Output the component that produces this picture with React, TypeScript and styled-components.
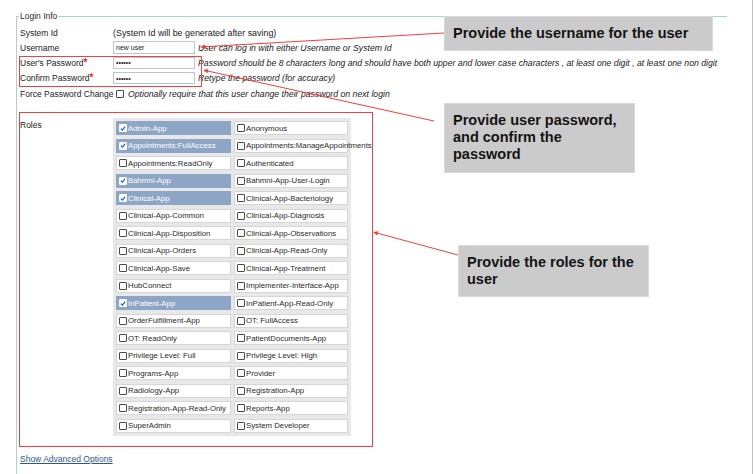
import React from "react";
import styled, { createGlobalStyle } from "styled-components";

const GlobalStyle = createGlobalStyle`
  html, body { margin: 0; padding: 0; background: #fff; }
  body { font-family: "Liberation Sans", Arial, sans-serif; color: #1e1e1e; }
  * { box-sizing: border-box; }
`;

const Page = styled.div`
  position: relative;
  width: 753px;
  height: 474px;
  border-right: 1px solid #c4c4c4;
  padding: 11px 0 0 16px;
  overflow: hidden;
`;

const Fieldset = styled.fieldset`
  margin: 0;
  width: 711px;
  min-height: 470px;
  border: none;
  border-top: 1px solid #a9d2d3;
  border-left: 1px solid #a9d2d3;
  padding: 0 0 0 2px;
`;

const Legend = styled.legend`
  font-size: 8.5px;
  line-height: 10px;
  padding: 0 1px;
  margin: 0;
  color: #2a2a2a;
`;

const Form = styled.div`
  display: flex;
  flex-direction: column;
  padding-top: 5px;
`;

const Row = styled.div<{ $h: number }>`
  display: flex;
  align-items: center;
  height: ${(p) => p.$h}px;
  font-size: 8.5px;
  white-space: nowrap;
`;

const Label = styled.div`
  width: 94px;
  flex: none;
  padding-left: 1px;
  color: #222;
`;

const Req = styled.span`
  color: #e41e1e;
  font-size: 10px;
  font-weight: bold;
  line-height: 8px;
`;

const Value = styled.span`
  color: #222;
  font-size: 8.9px;
`;

const TextInput = styled.input<{ $h: number }>`
  width: 82px;
  height: ${(p) => p.$h}px;
  flex: none;
  margin: 0;
  padding: 0 2px;
  border: 1px solid #b9c8c8;
  background: #fff;
  font-family: "Liberation Sans", Arial, sans-serif;
  font-size: 7px;
  color: #222;
  outline: none;
`;

const Hint = styled.span<{ $ml?: number }>`
  font-style: italic;
  font-size: 8.7px;
  margin-left: ${(p) => (p.$ml ?? 3)}px;
  color: #222;
`;

const Box = styled.span<{ $checked?: boolean }>`
  display: inline-flex;
  align-items: center;
  justify-content: center;
  flex: none;
  width: 8px;
  height: 8px;
  border: 1px solid ${(p) => (p.$checked ? "#ffffff" : "#4a4a4a")};
  border-radius: 1px;
  background: #fff;
`;

const FpcBox = styled(Box)`
  margin: 0 4px 0 3px;
`;

const RolesSection = styled.div`
  display: flex;
  align-items: flex-start;
  margin-top: 17px;
  font-size: 8.5px;
`;

const RolesLabel = styled.div`
  width: 94px;
  flex: none;
  padding: 2px 0 0 1px;
  line-height: 10px;
  color: #222;
`;

const RolesGrid = styled.div`
  display: grid;
  grid-template-columns: 115px 114px;
  grid-auto-rows: 14px;
  column-gap: 3px;
  row-gap: 3.5px;
  padding: 3px;
  background: #e8e8e8;
`;

const Cell = styled.div<{ $checked?: boolean }>`
  display: flex;
  align-items: center;
  gap: 1px;
  padding-left: 2px;
  border: 1px solid ${(p) => (p.$checked ? "#8ea6c5" : "#d6d6d6")};
  background: ${(p) => (p.$checked ? "#8ea6c5" : "#fff")};
  color: ${(p) => (p.$checked ? "#fff" : "#2a2a2a")};
  font-size: 7.8px;
  white-space: nowrap;
  overflow: visible;
`;

const AdvLink = styled.a`
  display: inline-block;
  margin-top: 18px;
  margin-left: 1px;
  font-size: 8.5px;
  color: #2b5a8a;
  text-decoration: underline;
  cursor: pointer;
`;

const Note = styled.div<{ $x: number; $y: number; $w: number; $h: number; $pt: number }>`
  position: absolute;
  left: ${(p) => p.$x}px;
  top: ${(p) => p.$y}px;
  width: ${(p) => p.$w}px;
  height: ${(p) => p.$h}px;
  padding: ${(p) => p.$pt}px 8px 0 8px;
  background: #cbcbcb;
  border: 1px solid #dadada;
  font-family: "Liberation Sans", Arial, sans-serif;
  font-weight: bold;
  font-size: 14.5px;
  line-height: 17px;
  color: #141414;
`;

const Highlight = styled.div<{ $x: number; $y: number; $w: number; $h: number }>`
  position: absolute;
  left: ${(p) => p.$x}px;
  top: ${(p) => p.$y}px;
  width: ${(p) => p.$w}px;
  height: ${(p) => p.$h}px;
  border: 1px solid #f04040;
  pointer-events: none;
`;

const Arrows = styled.svg`
  position: absolute;
  left: 0;
  top: 0;
  pointer-events: none;
`;

const Check = () => (
  <svg width="7" height="7" viewBox="0 0 7 7">
    <path d="M1 3.6 L2.8 5.4 L6 1.2" fill="none" stroke="#1f5fbf" strokeWidth="1.4" />
  </svg>
);

const roles: [string, boolean][] = [
  ["Admin-App", true], ["Anonymous", false],
  ["Appointments:FullAccess", true], ["Appointments:ManageAppointments", false],
  ["Appointments:ReadOnly", false], ["Authenticated", false],
  ["Bahmni-App", true], ["Bahmni-App-User-Login", false],
  ["Clinical-App", true], ["Clinical-App-Bacteriology", false],
  ["Clinical-App-Common", false], ["Clinical-App-Diagnosis", false],
  ["Clinical-App-Disposition", false], ["Clinical-App-Observations", false],
  ["Clinical-App-Orders", false], ["Clinical-App-Read-Only", false],
  ["Clinical-App-Save", false], ["Clinical-App-Treatment", false],
  ["HubConnect", false], ["Implementer-Interface-App", false],
  ["InPatient-App", true], ["InPatient-App-Read-Only", false],
  ["OrderFulfillment-App", false], ["OT: FullAccess", false],
  ["OT: ReadOnly", false], ["PatientDocuments-App", false],
  ["Privilege Level: Full", false], ["Privilege Level: High", false],
  ["Programs-App", false], ["Provider", false],
  ["Radiology-App", false], ["Registration-App", false],
  ["Registration-App-Read-Only", false], ["Reports-App", false],
  ["SuperAdmin", false], ["System Developer", false],
];

const Arrow = ({ x1, y1, x2, y2 }: { x1: number; y1: number; x2: number; y2: number }) => {
  const a = Math.atan2(y2 - y1, x2 - x1);
  const L = 5;
  const w = 2.2;
  const bx = x2 - L * Math.cos(a);
  const by = y2 - L * Math.sin(a);
  const p1 = `${bx + w * Math.sin(a)},${by - w * Math.cos(a)}`;
  const p2 = `${bx - w * Math.sin(a)},${by + w * Math.cos(a)}`;
  return (
    <g>
      <line x1={x1} y1={y1} x2={bx} y2={by} stroke="#f23c3c" strokeWidth="1" />
      <polygon points={`${x2},${y2} ${p1} ${p2}`} fill="#f23c3c" />
    </g>
  );
};

export default function App() {
  return (
    <>
      <GlobalStyle />
      <Page>
        <Fieldset>
          <Legend>Login Info</Legend>
          <Form>
            <Row $h={14}>
              <Label>System Id</Label>
              <Value>(System Id will be generated after saving)</Value>
            </Row>
            <Row $h={15}>
              <Label>Username</Label>
              <TextInput $h={13} readOnly value="new user" />
              <Hint>User can log in with either Username or System Id</Hint>
            </Row>
            <Row $h={15}>
              <Label>
                User's Password<Req>*</Req>
              </Label>
              <TextInput $h={12} type="password" readOnly value="abcdef" />
              <Hint>
                Password should be 8 characters long and should have both upper and lower case characters , at least one digit , at least one non digit
              </Hint>
            </Row>
            <Row $h={16}>
              <Label>
                Confirm Password<Req>*</Req>
              </Label>
              <TextInput $h={12} type="password" readOnly value="abcdef" />
              <Hint>Retype the password (for accuracy)</Hint>
            </Row>
            <Row $h={15}>
              <Label>Force Password Change</Label>
              <FpcBox />
              <Hint $ml={0}>Optionally require that this user change their password on next login</Hint>
            </Row>
          </Form>
          <RolesSection>
            <RolesLabel>Roles</RolesLabel>
            <RolesGrid>
              {roles.map(([name, checked]) => (
                <Cell key={name} $checked={checked}>
                  <Box $checked={checked}>{checked && <Check />}</Box>
                  {name}
                </Cell>
              ))}
            </RolesGrid>
          </RolesSection>
          <AdvLink>Show Advanced Options</AdvLink>
        </Fieldset>

        <Highlight $x={19} $y={56} $w={183} $h={31} />
        <Highlight $x={19} $y={112} $w={354} $h={335} />

        <Arrows width="755" height="474" viewBox="0 0 755 474">
          <Arrow x1={444} y1={33} x2={200} y2={47} />
          <Arrow x1={434} y1={121} x2={203} y2={70} />
          <Arrow x1={458} y1={255} x2={373} y2={232} />
        </Arrows>

        <Note $x={444} $y={16} $w={269} $h={35} $pt={8}>
          Provide the username for the user
        </Note>
        <Note $x={444} $y={103} $w={191} $h={70} $pt={8}>
          Provide user password, and confirm the password
        </Note>
        <Note $x={458} $y={245} $w={191} $h={52} $pt={8}>
          Provide the roles for the user
        </Note>
      </Page>
    </>
  );
}
